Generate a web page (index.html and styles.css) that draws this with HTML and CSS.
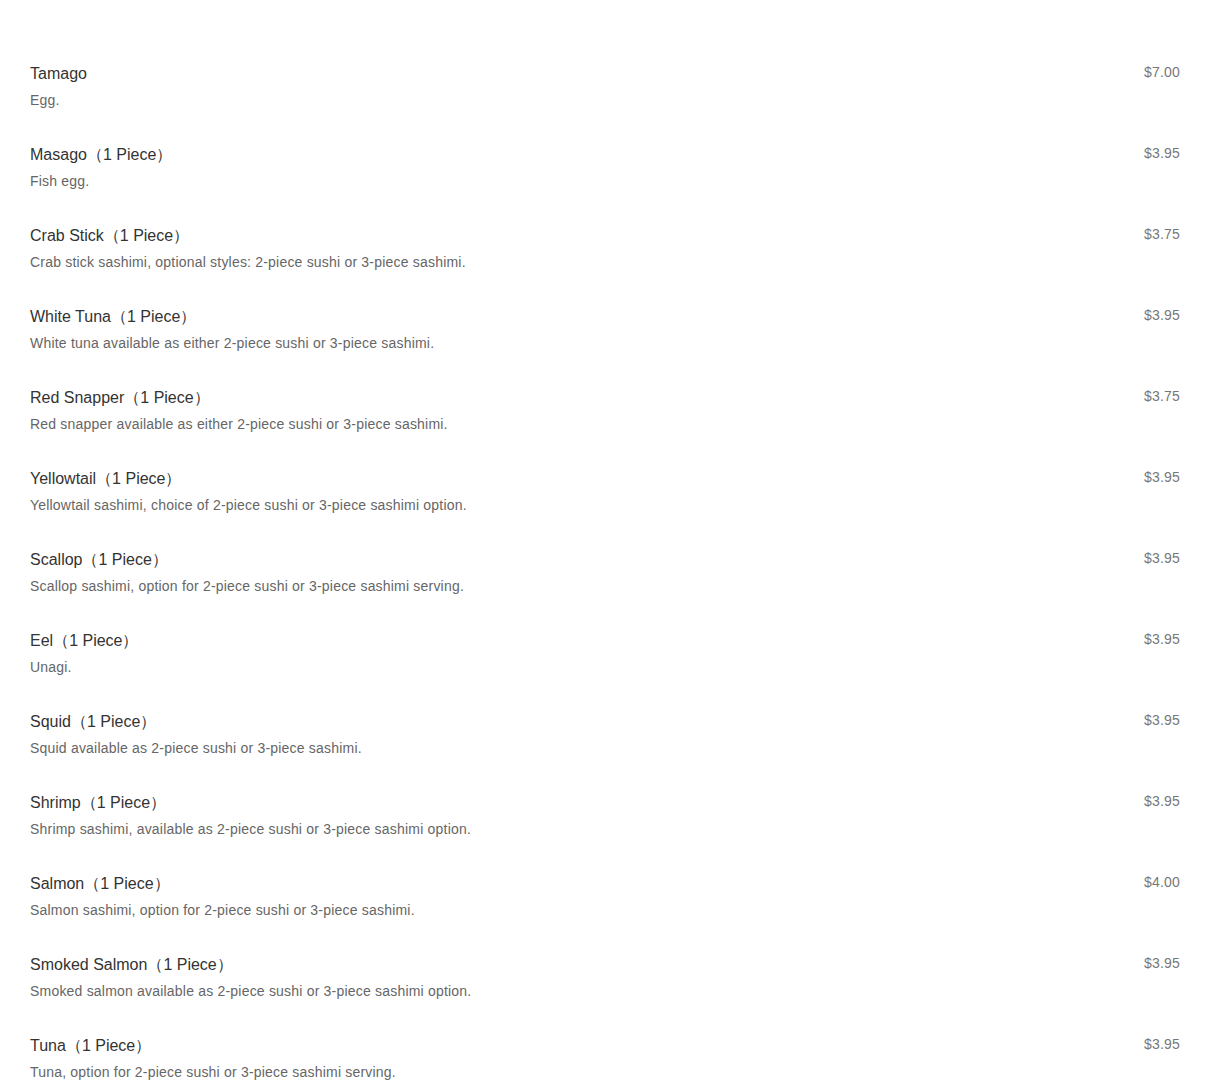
FILE: index.html
```html
<!DOCTYPE html>
<html lang="en">
<head>
  <meta charset="UTF-8" />
  <meta name="viewport" content="width=device-width, initial-scale=1.0" />
  <title>Sushi &amp; Sashimi</title>
  <link rel="stylesheet" href="styles.css">
</head>
<body>
  <div class="menu">

    <div class="item">
      <div class="info">
        <div class="name">Tamago</div>
        <div class="desc">Egg.</div>
      </div>
      <div class="price">$7.00</div>
    </div>

    <div class="item">
      <div class="info">
        <div class="name">Masago（1 Piece）</div>
        <div class="desc">Fish egg.</div>
      </div>
      <div class="price">$3.95</div>
    </div>

    <div class="item">
      <div class="info">
        <div class="name">Crab Stick（1 Piece）</div>
        <div class="desc">Crab stick sashimi, optional styles: 2-piece sushi or 3-piece sashimi.</div>
      </div>
      <div class="price">$3.75</div>
    </div>

    <div class="item">
      <div class="info">
        <div class="name">White Tuna（1 Piece）</div>
        <div class="desc">White tuna available as either 2-piece sushi or 3-piece sashimi.</div>
      </div>
      <div class="price">$3.95</div>
    </div>

    <div class="item">
      <div class="info">
        <div class="name">Red Snapper（1 Piece）</div>
        <div class="desc">Red snapper available as either 2-piece sushi or 3-piece sashimi.</div>
      </div>
      <div class="price">$3.75</div>
    </div>

    <div class="item">
      <div class="info">
        <div class="name">Yellowtail（1 Piece）</div>
        <div class="desc">Yellowtail sashimi, choice of 2-piece sushi or 3-piece sashimi option.</div>
      </div>
      <div class="price">$3.95</div>
    </div>

    <div class="item">
      <div class="info">
        <div class="name">Scallop（1 Piece）</div>
        <div class="desc">Scallop sashimi, option for 2-piece sushi or 3-piece sashimi serving.</div>
      </div>
      <div class="price">$3.95</div>
    </div>

    <div class="item">
      <div class="info">
        <div class="name">Eel（1 Piece）</div>
        <div class="desc">Unagi.</div>
      </div>
      <div class="price">$3.95</div>
    </div>

    <div class="item">
      <div class="info">
        <div class="name">Squid（1 Piece）</div>
        <div class="desc">Squid available as 2-piece sushi or 3-piece sashimi.</div>
      </div>
      <div class="price">$3.95</div>
    </div>

    <div class="item">
      <div class="info">
        <div class="name">Shrimp（1 Piece）</div>
        <div class="desc">Shrimp sashimi, available as 2-piece sushi or 3-piece sashimi option.</div>
      </div>
      <div class="price">$3.95</div>
    </div>

    <div class="item">
      <div class="info">
        <div class="name">Salmon（1 Piece）</div>
        <div class="desc">Salmon sashimi, option for 2-piece sushi or 3-piece sashimi.</div>
      </div>
      <div class="price">$4.00</div>
    </div>

    <div class="item">
      <div class="info">
        <div class="name">Smoked Salmon（1 Piece）</div>
        <div class="desc">Smoked salmon available as 2-piece sushi or 3-piece sashimi option.</div>
      </div>
      <div class="price">$3.95</div>
    </div>

    <div class="item">
      <div class="info">
        <div class="name">Tuna（1 Piece）</div>
        <div class="desc">Tuna, option for 2-piece sushi or 3-piece sashimi serving.</div>
      </div>
      <div class="price">$3.95</div>
    </div>

  </div>
</body>
</html>
```

FILE: styles.css
```css
body {
  font-family: "Liberation Sans", Arial, sans-serif;
  background: #fff;
  color: #333;
  margin: 0;
  padding: 0;
}

.menu {
  padding: 62px 30px 0;
}

.item {
  display: flex;
  justify-content: space-between;
  align-items: flex-start;
  margin-bottom: 33px;
}

.name {
  padding-top: 1px;
  font-size: 16px;
  line-height: 22px;
  color: #333;
}

.desc {
  margin-top: 5px;
  font-size: 14px;
  line-height: 20px;
  letter-spacing: 0.2px;
  color: #666;
}

.price {
  font-size: 14px;
  line-height: 20px;
  letter-spacing: 0.2px;
  color: #777;
}
```
